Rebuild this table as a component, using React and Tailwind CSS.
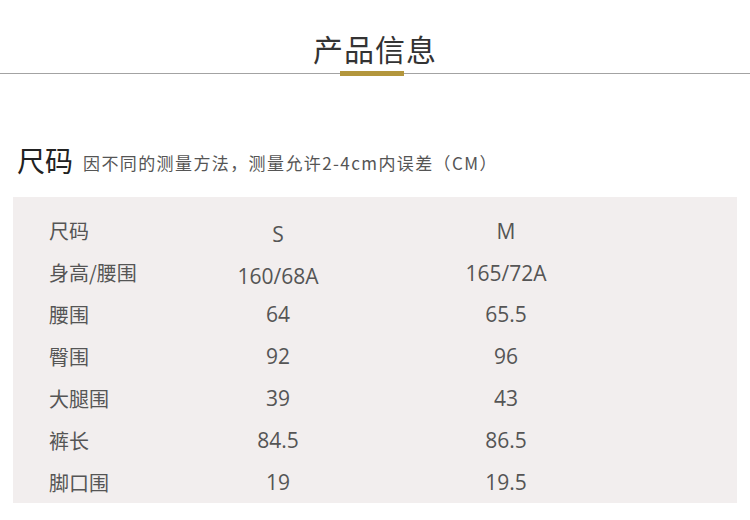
const rows = [
  ["尺码", "S", "M"],
  ["身高/腰围", "160/68A", "165/72A"],
  ["腰围", "64", "65.5"],
  ["臀围", "92", "96"],
  ["大腿围", "39", "43"],
  ["裤长", "84.5", "86.5"],
  ["脚口围", "19", "19.5"],
];

const latin = {
  fontFamily: '"Open Sans", "Noto Sans CJK SC", sans-serif',
};
const cjk = {
  fontFamily: '"Noto Sans CJK SC", "Open Sans", sans-serif',
};

export default function App() {
  return (
    <main className="h-[520px] w-[750px] overflow-hidden bg-white text-[#4a4a4a]" style={latin}>
      <header className="pt-[28px]">
        <h1 className="text-center text-[30px] leading-[40px] tracking-[1px] text-[#333]" style={cjk}>
          产品信息
        </h1>
        <div className="mt-[3px] flex h-[5px] items-center">
          <div className="h-px w-[340px] bg-[#a3a3a3]" />
          <div className="h-[5px] w-[64px] bg-[#b3963c]" />
          <div className="h-px flex-1 bg-[#a3a3a3]" />
        </div>
      </header>

      <section className="mt-[68px] flex items-end pl-[17px]">
        <h2 className="text-[28px] leading-[32px] text-[#222]" style={cjk}>尺码</h2>
        <p className="mb-[1px] ml-[10px] text-[17px] leading-[24px] tracking-[1.4px] text-[#555]" style={cjk}>
          因不同的测量方法，测量允许2-4cm内误差（CM）
        </p>
      </section>

      <section className="mx-[13px] mt-[21px] h-[306px] bg-[#f2eeee] pt-[13px]">
        {rows.map(([label, s, m], i) => (
          <div
            key={label}
            className="grid h-[42px] grid-cols-[190px_150px_306px] items-center text-[21px] text-[#555]"
          >
            <span className="pl-[36px] text-[20px]" style={cjk}>{label}</span>
            <span className={i < 2 ? "pt-[7px] text-center" : "text-center"}>{s}</span>
            <span className={i < 2 ? "pt-[2px] text-center" : "text-center"}>{m}</span>
          </div>
        ))}
      </section>
    </main>
  );
}
